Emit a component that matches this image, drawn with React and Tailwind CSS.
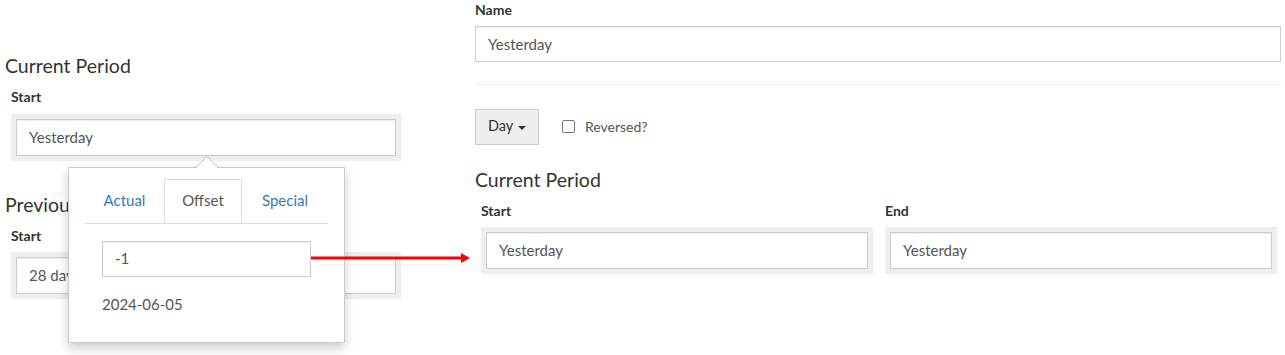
function Field({ value, className = "" }) {
  return (
    <div className={`bg-[#eeeeee] p-[5px] ${className}`}>
      <div className="h-[37px] border border-[#cccccc] bg-white px-[12px] flex items-center text-[15px] text-[#555555] shadow-[inset_0_1px_1px_rgba(0,0,0,0.075)] whitespace-nowrap overflow-hidden">
        {value}
      </div>
    </div>
  );
}

export default function App() {
  return (
    <div className="relative w-[1285px] h-[355px] bg-white overflow-hidden font-['Lato',sans-serif] text-[14px] text-[#333333] flex">
      {/* Left panel */}
      <div className="w-[470px] shrink-0 pl-[5px] pt-[55px]">
        <div className="w-[402px]">
          <div className="text-[19.5px] leading-[22px]">Current Period</div>
          <div className="px-[6px]">
            <div className="mt-[10px] font-bold leading-[20px]">Start</div>
            <Field className="mt-[7px]" value="Yesterday" />
          </div>
          <div className="mt-[33px] text-[19.5px] leading-[22px]">Previous Period</div>
          <div className="px-[6px]">
            <div className="mt-[10px] font-bold leading-[20px]">Start</div>
            <Field className="mt-[6px]" value="28 days ago" />
          </div>
        </div>
      </div>

      {/* Right panel */}
      <div className="w-[815px] shrink-0 pl-[5px]">
        <div className="w-[808px]">
          <div className="font-bold leading-[20px]">Name</div>
          <div className="mt-[6px] w-[806px] h-[36px] border border-[#cccccc] bg-white px-[12px] flex items-center text-[15px] text-[#555555] shadow-[inset_0_1px_1px_rgba(0,0,0,0.075)]">
            Yesterday
          </div>
          <div className="mt-[22px] w-[806px] h-px bg-[#eeeeee]" />
          <div className="mt-[24px] flex items-center">
            <div className="h-[36px] w-[64px] border border-[#cccccc] bg-[#eeeeee] flex items-center pl-[12px] pb-[2px] text-[14.5px] text-[#333333]">
              <span>Day</span>
              <span className="ml-[5px] mt-[3px] w-0 h-0 border-t-[4px] border-x-[4px] border-x-transparent border-t-[#333333]" />
            </div>
            <div className="ml-[23px] flex items-center pb-[1px]">
              <span className="w-[13px] h-[13px] border border-[#767676] rounded-[2px] bg-white" />
              <span className="ml-[10px] text-[14px] text-[#555555]">Reversed?</span>
            </div>
          </div>
          <div className="mt-[24px] text-[19.5px] leading-[22px]">Current Period</div>
          <div className="grid grid-cols-2">
            <div className="px-[6px]">
              <div className="mt-[10px] font-bold leading-[20px]">Start</div>
              <Field className="mt-[6px]" value="Yesterday" />
            </div>
            <div className="px-[6px]">
              <div className="mt-[10px] font-bold leading-[20px]">End</div>
              <Field className="mt-[6px]" value="Yesterday" />
            </div>
          </div>
        </div>
      </div>

      {/* Popover */}
      <div className="absolute left-[68px] top-[167px] w-[277px] h-[176px] bg-white border border-[rgba(0,0,0,0.2)] shadow-[0_5px_10px_rgba(0,0,0,0.2)]">
        <svg className="absolute left-[126px] top-[-13px]" width="24" height="14" viewBox="0 0 24 14">
          <path d="M0 14 L12 1.5 L24 14 Z" fill="white" />
          <path d="M0.5 13 L12 1.5 L23.5 13" fill="none" stroke="rgba(0,0,0,0.25)" strokeWidth="1" />
        </svg>
        <div className="pt-[11px] pl-[16px]">
          <div className="flex w-[243px] border-b border-[#dddddd] text-[15px]">
            <div className="w-[79px] h-[44px] pb-[1px] flex items-center justify-center text-[#337ab7]">Actual</div>
            <div className="w-[78px] h-[44px] pb-[1px] -mb-px border border-[#dddddd] border-b-white bg-white flex items-center justify-center text-[#555555]">Offset</div>
            <div className="flex-1 h-[44px] pb-[1px] flex items-center justify-center text-[#337ab7]">Special</div>
          </div>
          <div className="pl-[17px] pt-[17px]">
            <div className="w-[209px] h-[36px] pb-[1px] border border-[#cccccc] bg-white px-[12px] flex items-center text-[15px] text-[#555555] shadow-[inset_0_1px_1px_rgba(0,0,0,0.075)]">
              -1
            </div>
            <div className="mt-[17px] leading-[20px] text-[15px] text-[#555555]">2024-06-05</div>
          </div>
        </div>
      </div>

      {/* Red arrow */}
      <svg className="absolute left-[311px] top-[252px]" width="160" height="12" viewBox="0 0 160 12">
        <line x1="0" y1="6" x2="152" y2="6" stroke="#ff0000" strokeWidth="3" />
        <polygon points="150,1 159,6 150,11" fill="#ff0000" />
      </svg>
    </div>
  );
}
